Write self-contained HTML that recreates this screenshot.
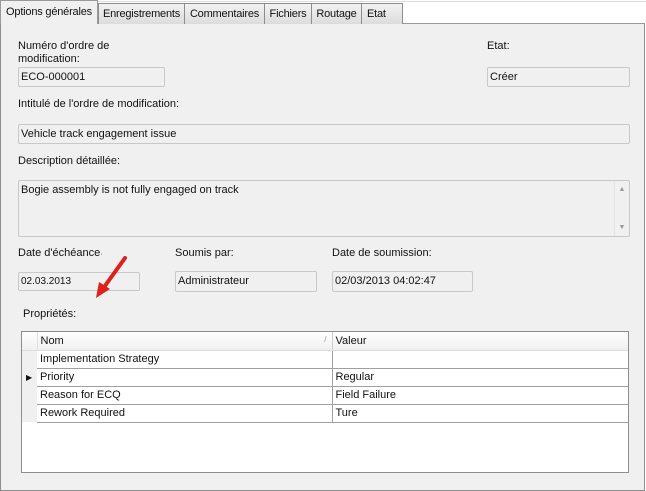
<!DOCTYPE html>
<html><head><meta charset="utf-8"><style>
*{box-sizing:border-box;margin:0;padding:0}
body{width:646px;height:491px;background:#fff;font-family:"Liberation Sans",sans-serif;font-size:11px;color:#111;position:relative;overflow:hidden}
.a{position:absolute}
.panel{left:0;top:23px;width:645px;height:468px;background:#f0f0f0;border:1px solid #8d8d8d;border-top-color:#999}
.tab{top:3px;height:21px;border:1px solid #8d8d8d;border-bottom:none;background:linear-gradient(#f2f2f2,#dcdcdc);padding:4px 0 0;font-size:11px;white-space:nowrap;text-align:center;letter-spacing:-0.2px}
.sel{top:0;height:24px;background:#f0f0f0;padding-top:5px;z-index:2;border-color:#999}
.in{background:#f0f0f0;border:1px solid #c8c8c8;border-radius:2px;padding:3px 2px;font-size:11px}
.lb{font-size:11px}
table{border-collapse:collapse;font-size:11px}
td{height:18px;border-bottom:1px solid #a0a0a0;padding:0 3px}
</style></head><body>
<div class="a" style="left:0;top:1px;width:646px;height:1px;background:#ddd"></div>
<div class="a panel"></div>
<div class="a tab sel" style="left:0;width:98px">Options générales</div>
<div class="a tab" style="left:98px;width:87px">Enregistrements</div>
<div class="a tab" style="left:184px;width:81px">Commentaires</div>
<div class="a tab" style="left:264px;width:48px">Fichiers</div>
<div class="a tab" style="left:311px;width:51px">Routage</div>
<div class="a tab" style="left:361px;width:42px;text-align:left;padding-left:5px">Etat</div>

<div class="a lb" style="left:18px;top:40px;line-height:13px">Numéro d'ordre de<br>modification:</div>
<div class="a in" style="left:18px;top:67px;width:147px;height:20px">ECO-000001</div>
<div class="a lb" style="left:487px;top:40px">Etat:</div>
<div class="a in" style="left:487px;top:67px;width:143px;height:20px">Créer</div>
<div class="a lb" style="left:18px;top:98px">Intitulé de l'ordre de modification:</div>
<div class="a in" style="left:18px;top:124px;width:612px;height:20px">Vehicle track engagement issue</div>
<div class="a lb" style="left:18px;top:155px">Description détaillée:</div>
<div class="a in" style="left:18px;top:180px;width:612px;height:57px">Bogie assembly is not fully engaged on track</div>
<div class="a" style="left:614px;top:181px;width:15px;height:55px;border-left:1px solid #e4e4e4;color:#999;font-size:7px;text-align:center;line-height:9px;padding-top:4px">▲<div style="margin-top:29px">▼</div></div>
<div class="a lb" style="left:18px;top:247px">Date d'échéance<span style="font-size:7px">·</span></div>
<div class="a lb" style="left:175px;top:247px">Soumis par:</div>
<div class="a lb" style="left:332px;top:247px">Date de soumission:</div>
<div class="a in" style="left:18px;top:272px;width:122px;height:19px;font-size:10px">02.03.2013</div>
<div class="a in" style="left:175px;top:271px;width:142px;height:21px">Administrateur</div>
<div class="a in" style="left:332px;top:271px;width:141px;height:21px">02/03/2013 04:02:47</div>
<svg class="a" style="left:92px;top:252px" width="40" height="50"><line x1="33" y1="6" x2="10" y2="38" stroke="#e0201a" stroke-width="4" stroke-linecap="round"/><polygon points="4,46 7,30 18,37" fill="#e0201a"/></svg>
<div class="a lb" style="left:23px;top:308px">Propriétés:</div>
<div class="a" style="left:21px;top:331px;width:608px;height:142px;background:#fff;border:1px solid #8d8d8d">
<table style="width:606px">
<tr style="background:linear-gradient(#fff,#f0f0f0)"><td style="width:15px;border-right:1px solid #e0e0e0;border-bottom-color:#ddd"></td><td style="width:295px;border-right:1px solid #ccc;border-bottom-color:#ddd;position:relative">Nom<span style="position:absolute;right:5px;color:#999;font-size:8px">/</span></td><td style="border-bottom-color:#ddd">Valeur</td></tr>
<tr><td style="background:#f0f0f0;border-bottom:none"></td><td style="border-right:1px solid #a0a0a0">Implementation Strategy</td><td></td></tr>
<tr><td style="background:#f0f0f0;border-bottom:none;font-size:8px;padding-left:4px">▶</td><td style="border-right:1px solid #a0a0a0">Priority</td><td>Regular</td></tr>
<tr><td style="background:#f0f0f0;border-bottom:none"></td><td style="border-right:1px solid #a0a0a0">Reason for ECQ</td><td>Field Failure</td></tr>
<tr><td style="background:#f0f0f0;border-bottom:none"></td><td style="border-right:1px solid #a0a0a0">Rework Required</td><td>Ture</td></tr>
</table></div>
</body></html>
